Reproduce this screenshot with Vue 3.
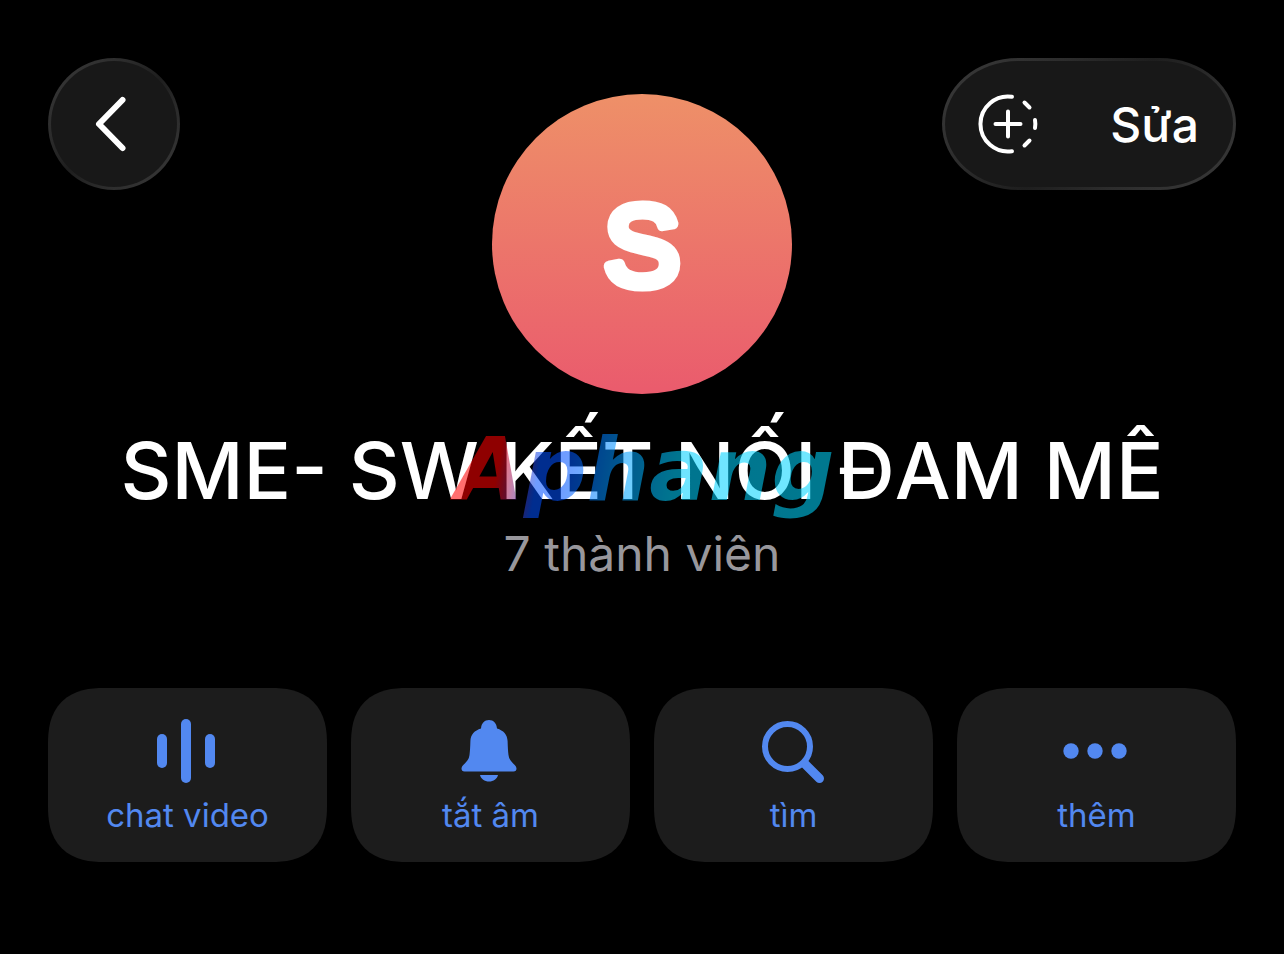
<script setup>
import { ref } from 'vue';

const group = ref({
  initial: 'S',
  name: 'SME- SW KẾT NỐI ĐAM MÊ',
  members: '7 thành viên',
});

const actions = ref([
  { icon: 'voice', label: 'chat video' },
  { icon: 'bell', label: 'tắt âm' },
  { icon: 'search', label: 'tìm' },
  { icon: 'more', label: 'thêm' },
]);
</script>

<template>
  <main class="profile">
    <header class="top">
      <button class="glass back" aria-label="Quay lại">
        <svg width="64" height="64" viewBox="0 0 64 64">
          <path d="M40.500 8L17 32L40.500 56" class="chevron" />
        </svg>
      </button>

      <svg class="avatar" viewBox="0 0 300 300">
        <defs>
          <linearGradient id="avatar-fill" x1="0" y1="0" x2="0" y2="1">
            <stop offset="0" stop-color="#ee9068" />
            <stop offset="1" stop-color="#ea5b6d" />
          </linearGradient>
        </defs>
        <circle cx="150" cy="150" r="150" fill="url(#avatar-fill)" />
        <text x="150" y="191" class="initial">{{ group.initial }}</text>
      </svg>

      <div class="glass tools">
        <button class="tool" aria-label="Thêm tin">
          <svg width="64" height="64" viewBox="0 0 64 64" class="story">
            <path d="M36 4.800A27.500 27.500 0 1 0 36 59.200" />
            <path d="M48.500 10.500L53.500 15.500M59 28Q59.700 32 59 36M53.500 48.500L48.500 53.500" />
            <path d="M32 19.500V44.500M19.500 32H44.500" />
          </svg>
        </button>
        <button class="tool edit">Sửa</button>
      </div>
    </header>

    <section class="info">
      <h1>{{ group.name }}</h1>
      <p>{{ group.members }}</p>
      <!-- Translucent brand mark over the title -->
      <span class="brand">Aphang</span>
    </section>

    <nav class="actions">
      <button v-for="action in actions" :key="action.icon" class="action">
        <svg width="72" height="72" viewBox="2 0 72 72" fill="currentColor">
          <g v-if="action.icon === 'voice'">
            <rect x="7" y="19" width="10" height="34" rx="5" />
            <rect x="31" y="4" width="10" height="64" rx="5" />
            <rect x="55" y="19" width="10" height="34" rx="5" />
          </g>
          <g v-else-if="action.icon === 'bell'">
            <path d="M36 5C40.500 5 43.500 8 44 13.500C50.500 15.500 54.300 19.500 54.600 26C54.800 32 55 36 55.500 40C56.200 47.500 63.500 49.500 63.500 53.500Q63.500 56.500 60.500 56.500H11.500Q8.500 56.500 8.500 53.500C8.500 49.500 15.800 47.500 16.500 40C17 36 17.200 32 17.400 26C17.700 19.500 21.500 15.500 28 13.500C28.500 8 31.500 5 36 5Z" />
            <path d="M27 60H45C44 64 40.500 66.500 36 66.500S28 64 27 60Z" />
          </g>
          <g v-else-if="action.icon === 'search'" fill="none" stroke="currentColor" stroke-linecap="round">
            <circle cx="31.500" cy="31.500" r="22.500" stroke-width="6" />
            <path d="M49 49L63.500 63.500" stroke-width="9" />
          </g>
          <g v-else>
            <circle cx="12" cy="36" r="7.700" />
            <circle cx="36" cy="36" r="7.700" />
            <circle cx="60" cy="36" r="7.700" />
          </g>
        </svg>
        <span>{{ action.label }}</span>
      </button>
    </nav>
  </main>
</template>

<style>
body {
  background: #000;
}
</style>

<style scoped>
.profile {
  min-height: 100vh;
  box-sizing: border-box;
  padding: 58px 48px 48px;
  background: #000;
  color: #fff;
  font-family: Inter, "Liberation Sans", sans-serif;
}

button {
  border: none;
  padding: 0;
  background: none;
  color: inherit;
  font-family: inherit;
  cursor: pointer;
}

svg {
  display: block;
}

/* Header */
.top {
  display: grid;
  grid-template-columns: 1fr 300px 1fr;
  align-items: start;
}

.glass {
  height: 132px;
  box-sizing: border-box;
  border: 3px solid transparent;
  background:
    linear-gradient(#181818, #181818) padding-box,
    linear-gradient(135deg, #3a3a3a, #2c2c2c 30%, #1e1e1e 50%, #2c2c2c 70%, #3a3a3a) border-box;
}

.back {
  width: 132px;
  border-radius: 50%;
  display: flex;
  align-items: center;
  justify-content: center;
}

.chevron {
  fill: none;
  stroke: #fff;
  stroke-width: 6;
  stroke-linecap: round;
  stroke-linejoin: round;
}

.avatar {
  width: 300px;
  margin-top: 36px;
}

.initial {
  font-family: "Liberation Sans", sans-serif;
  font-size: 114px;
  text-anchor: middle;
  fill: #fff;
  stroke: #fff;
  stroke-width: 11px;
  stroke-linejoin: round;
}

.tools {
  justify-self: end;
  display: flex;
  align-items: center;
  gap: 70px;
  padding: 0 34px 0 31px;
  border-radius: 76px / 66px;
}

.story {
  fill: none;
  stroke: #fff;
  stroke-width: 4;
  stroke-linecap: round;
}

.edit {
  font-size: 48px;
  font-weight: 500;
}

/* Name and member count */
.info {
  position: relative;
  text-align: center;
}

h1 {
  margin: 26px 0 0;
  font-size: 79px;
  font-weight: 500;
  line-height: 100px;
  white-space: nowrap;
}

p {
  margin: 4px 0 0;
  color: #98979c;
  font-size: 48px;
  line-height: 60px;
}

.brand {
  position: absolute;
  top: -8px;
  left: 50%;
  transform: translateX(-50%);
  padding: 0 4px 0 10px;
  font-family: "DejaVu Sans", sans-serif;
  font-size: 88px;
  font-weight: 700;
  font-style: italic;
  line-height: 116px;
  color: transparent;
  background: linear-gradient(100deg, #f00 15%, #0050ff 25%, #0050ff 31%, #0090ff 42%, #00d0ff 58%, #00d8ff);
  background-clip: text;
  opacity: 0.56;
  pointer-events: none;
}

/* Action cards */
.actions {
  display: grid;
  grid-template-columns: repeat(4, 1fr);
  gap: 24px;
  margin-top: 104px;
}

.action {
  height: 174px;
  display: flex;
  flex-direction: column;
  align-items: center;
  padding-top: 27px;
  border-radius: 56px;
  corner-shape: superellipse(1.3);
  background: #1c1c1c;
  color: #5288f0;
  font-size: 33px;
  line-height: 40px;
}

.action span {
  margin-top: 8px;
}
</style>
